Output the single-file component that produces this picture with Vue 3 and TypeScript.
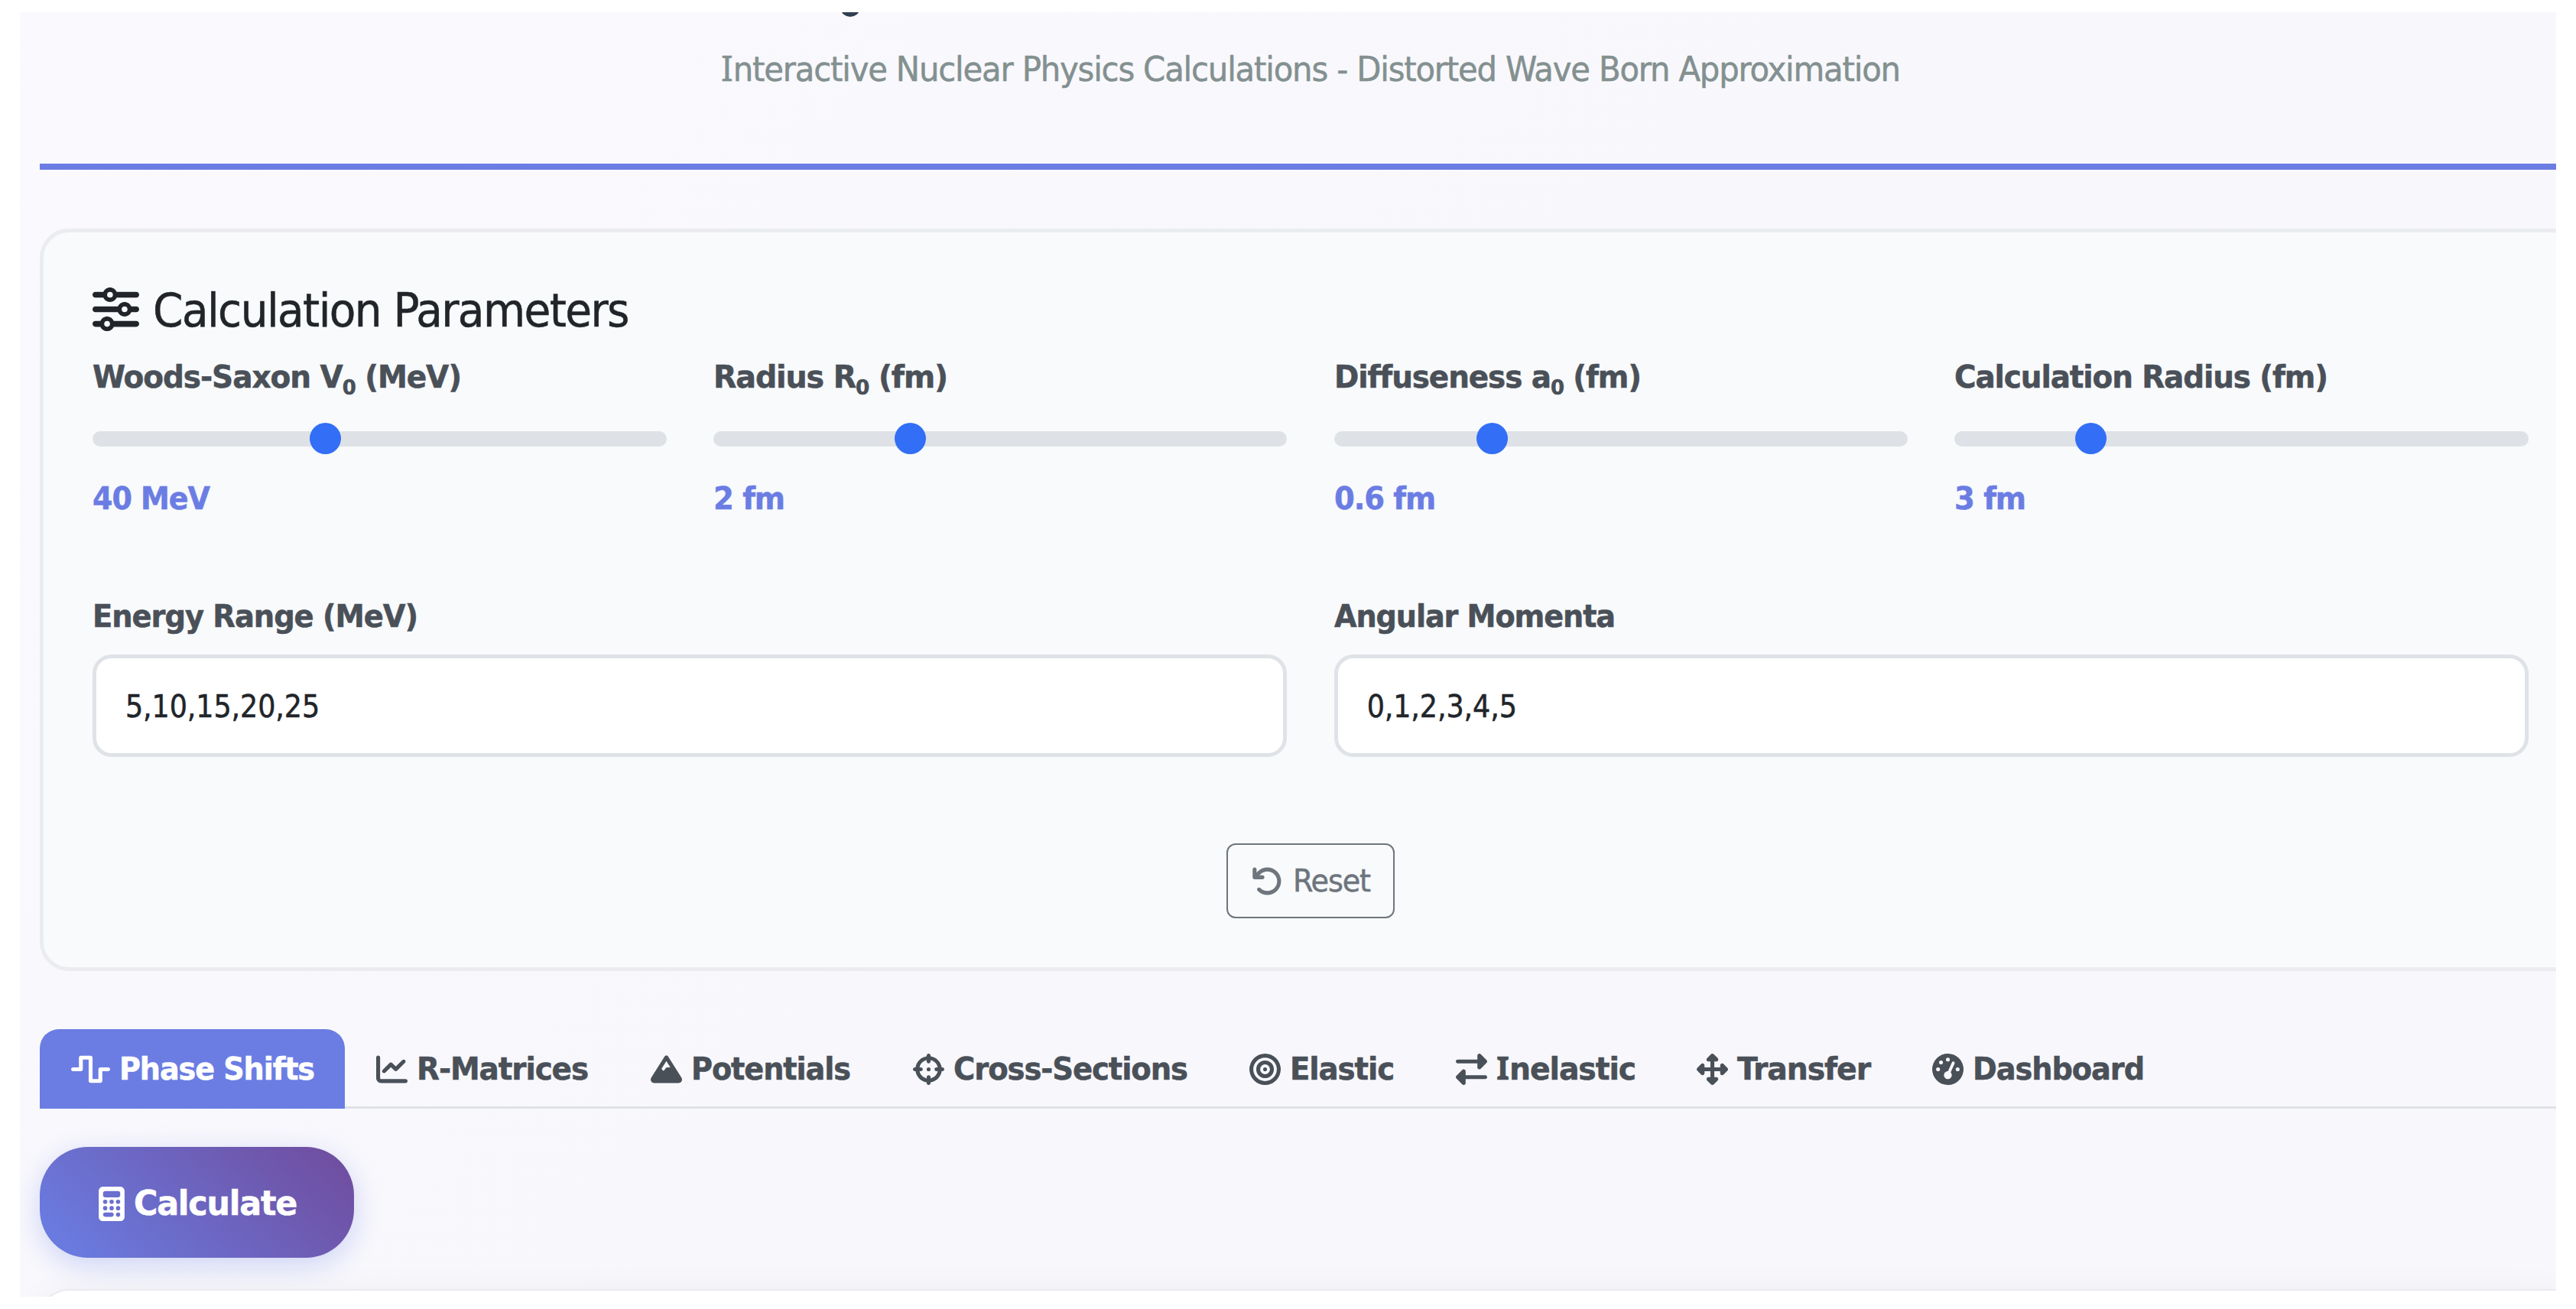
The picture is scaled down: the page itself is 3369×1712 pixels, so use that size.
<script setup lang="ts">
import { ref } from 'vue'

interface Param {
  label: string
  sub?: string
  unit: string
  value: string
  ratio: number
  labelWidth: number
  valueWidth: number
}

interface Tab {
  name: string
  icon: string
  box: string
  iconWidth: number
  width: number
  textWidth: number
}

const params: Param[] = [
  { label: 'Woods-Saxon V', sub: '0', unit: ' (MeV)', value: '40 MeV', ratio: 0.4, labelWidth: 482, valueWidth: 153 },
  { label: 'Radius R', sub: '0', unit: ' (fm)', value: '2 fm', ratio: 0.3343, labelWidth: 306, valueWidth: 93 },
  { label: 'Diffuseness a', sub: '0', unit: ' (fm)', value: '0.6 fm', ratio: 0.2625, labelWidth: 401, valueWidth: 132 },
  { label: 'Calculation Radius', unit: ' (fm)', value: '3 fm', ratio: 0.2222, labelWidth: 488, valueWidth: 93 },
]

const energies = ref('5,10,15,20,25')
const momenta = ref('0,1,2,3,4,5')
const active = ref('Phase Shifts')

const tabs: Tab[] = [
  { name: 'Phase Shifts', box: '0 0 640 512', iconWidth: 51, width: 399, textWidth: 255,
    icon: 'M128 64c0-17.7 14.3-32 32-32H320c17.7 0 32 14.3 32 32V416h96V256c0-17.7 14.3-32 32-32H608c17.7 0 32 14.3 32 32s-14.3 32-32 32H512V448c0 17.7-14.3 32-32 32H320c-17.7 0-32-14.3-32-32V96H192V256c0 17.7-14.3 32-32 32H32c-17.7 0-32-14.3-32-32s14.3-32 32-32h96V64z' },
  { name: 'R-Matrices', box: '0 0 512 512', iconWidth: 41, width: 358.6, textWidth: 224,
    icon: 'M64 64c0-17.7-14.3-32-32-32S0 46.3 0 64V400c0 44.2 35.8 80 80 80H480c17.7 0 32-14.3 32-32s-14.3-32-32-32H80c-8.8 0-16-7.2-16-16V64zm406.6 86.6c12.5-12.5 12.5-32.8 0-45.3s-32.8-12.5-45.3 0L320 210.7l-57.4-57.4c-12.5-12.5-32.8-12.5-45.3 0l-112 112c-12.5 12.5-12.5 32.8 0 45.3s32.8 12.5 45.3 0L240 221.3l57.4 57.4c12.5 12.5 32.8 12.5 45.3 0l128-128z' },
  { name: 'Potentials', box: '0 0 512 512', iconWidth: 41, width: 343, textWidth: 208,
    icon: 'M256 32c12.5 0 24.1 6.4 30.7 17L503.4 394.4c5.6 8.9 8.6 19.2 8.6 29.7c0 30.9-25 55.9-55.9 55.9H55.9C25 480 0 455 0 424.1c0-10.5 3-20.8 8.6-29.7L225.2 49c6.6-10.6 18.3-17 30.8-17zm65 192L256 120.4 176.9 246.5l18.3 24.4c6.4 8.5 19.2 8.5 25.6 0l25.6-34.1c6-8.1 15.5-12.8 25.6-12.8h49z' },
  { name: 'Cross-Sections', box: '0 0 512 512', iconWidth: 41, width: 440.4, textWidth: 306,
    icon: 'M256 0c17.7 0 32 14.3 32 32V42.4c93.7 13.9 167.7 88 181.6 181.6H480c17.7 0 32 14.3 32 32s-14.3 32-32 32H469.6c-13.9 93.7-88 167.7-181.6 181.6V480c0 17.7-14.3 32-32 32s-32-14.3-32-32V469.6C130.3 455.7 56.3 381.7 42.4 288H32c-17.7 0-32-14.3-32-32s14.3-32 32-32H42.4C56.3 130.3 130.3 56.3 224 42.4V32c0-17.7 14.3-32 32-32zM107.4 288c12.5 58.3 58.4 104.1 116.6 116.6V384c0-17.7 14.3-32 32-32s32 14.3 32 32v20.6c58.3-12.5 104.1-58.4 116.6-116.6H384c-17.7 0-32-14.3-32-32s14.3-32 32-32h20.6C392.1 165.7 346.3 119.9 288 107.4V128c0 17.7-14.3 32-32 32s-32-14.3-32-32V107.4C165.7 119.9 119.9 165.7 107.4 224H128c17.7 0 32 14.3 32 32s-14.3 32-32 32H107.4zM256 224a32 32 0 1 1 0 64 32 32 0 1 1 0-64z' },
  { name: 'Elastic', box: '0 0 512 512', iconWidth: 41, width: 269.7, textWidth: 136,
    icon: 'M448 256A192 192 0 1 0 64 256a192 192 0 1 0 384 0zM0 256a256 256 0 1 1 512 0A256 256 0 1 1 0 256zm256 80a80 80 0 1 0 0-160 80 80 0 1 0 0 160zm0-224a144 144 0 1 1 0 288 144 144 0 1 1 0-288zM224 256a32 32 0 1 1 64 0 32 32 0 1 1 -64 0z' },
  { name: 'Inelastic', box: '0 0 512 512', iconWidth: 41, width: 315.6, textWidth: 182,
    icon: 'M32 96l320 0V32c0-12.9 7.8-24.6 19.8-29.6s25.7-2.2 34.9 6.9l96 96c6 6 9.4 14.1 9.4 22.6s-3.4 16.6-9.4 22.6l-96 96c-9.2 9.2-22.9 11.9-34.9 6.9s-19.8-16.6-19.8-29.6V160L32 160c-17.7 0-32-14.3-32-32s14.3-32 32-32zM480 352c17.7 0 32 14.3 32 32s-14.3 32-32 32H160v64c0 12.9-7.8 24.6-19.8 29.6s-25.7 2.2-34.9-6.9l-96-96c-6-6-9.4-14.1-9.4-22.6s3.4-16.6 9.4-22.6l96-96c9.2-9.2 22.9-11.9 34.9-6.9s19.8 16.6 19.8 29.6l0 64H480z' },
  { name: 'Transfer', box: '0 0 512 512', iconWidth: 41, width: 307.6, textWidth: 174,
    icon: 'M278.6 9.4c-12.5-12.5-32.8-12.5-45.3 0l-64 64c-9.2 9.2-11.9 22.9-6.9 34.9s16.6 19.8 29.6 19.8h32v96H128V192c0-12.9-7.8-24.6-19.8-29.6s-25.7-2.2-34.9 6.9l-64 64c-12.5 12.5-12.5 32.8 0 45.3l64 64c9.2 9.2 22.9 11.9 34.9 6.9s19.8-16.6 19.8-29.6V288h96v96H192c-12.9 0-24.6 7.8-29.6 19.8s-2.2 25.7 6.9 34.9l64 64c12.5 12.5 32.8 12.5 45.3 0l64-64c9.2-9.2 11.9-22.9 6.9-34.9s-16.6-19.8-29.6-19.8H288V288h96v32c0 12.9 7.8 24.6 19.8 29.6s25.7 2.2 34.9-6.9l64-64c12.5-12.5 12.5-32.8 0-45.3l-64-64c-9.2-9.2-22.9-11.9-34.9-6.9s-19.8 16.6-19.8 29.6v32H288V128h32c12.9 0 24.6-7.8 29.6-19.8s2.2-25.7-6.9-34.9l-64-64z' },
  { name: 'Dashboard', box: '0 0 512 512', iconWidth: 41, width: 357, textWidth: 224,
    icon: 'M0 256a256 256 0 1 1 512 0A256 256 0 1 1 0 256zM288 96a32 32 0 1 0 -64 0 32 32 0 1 0 64 0zM256 416c35.3 0 64-28.7 64-64c0-17.4-6.9-33.1-18.1-44.6L366 161.7c5.3-12.1-.2-26.3-12.3-31.6s-26.3 .2-31.6 12.3L257.9 288c-.6 0-1.3 0-1.9 0c-35.3 0-64 28.7-64 64s28.7 64 64 64zM176 144a32 32 0 1 0 -64 0 32 32 0 1 0 64 0zM96 288a32 32 0 1 0 0-64 32 32 0 1 0 0 64zm352-32a32 32 0 1 0 -64 0 32 32 0 1 0 64 0z' },
]

// Stretches a label so that it fills exactly the given number of pixels.
const vFit = {
  mounted(el: HTMLElement, binding: { value: number }) {
    const natural = el.getBoundingClientRect().width
    el.style.transform = `scaleX(${binding.value / natural})`
  },
}
</script>

<template>
  <div class="page">
    <main class="frame">
      <div class="content">
        <header class="header">
          <span class="descender"></span>
          <p class="subtitle"><span v-fit="1542" class="fit centered"><span class="slab">I</span>nteractive Nuclear Physics Calculations - Distorted Wave Born Approximation</span></p>
        </header>

        <section class="panel">
          <h4 class="title">
            <svg class="title-icon" viewBox="0 0 512 512"><path d="M0 416c0 17.7 14.3 32 32 32l54.7 0c12.3 28.3 40.5 48 73.3 48s61-19.7 73.3-48L480 448c17.7 0 32-14.3 32-32s-14.3-32-32-32l-246.7 0c-12.3-28.3-40.5-48-73.3-48s-61 19.7-73.3 48L32 384c-17.7 0-32 14.3-32 32zm128 0a32 32 0 1 1 64 0 32 32 0 1 1 -64 0zM320 256a32 32 0 1 1 64 0 32 32 0 1 1 -64 0zm32-80c-32.8 0-61 19.7-73.3 48L32 224c-17.7 0-32 14.3-32 32s14.3 32 32 32l246.7 0c12.3 28.3 40.5 48 73.3 48s61-19.7 73.3-48l54.7 0c17.7 0 32-14.3 32-32s-14.3-32-32-32l-54.7 0c-12.3-28.3-40.5-48-73.3-48zM192 128a32 32 0 1 1 0-64 32 32 0 1 1 0 64zm73.3-64C253 35.7 224.8 16 192 16s-61 19.7-73.3 48L32 64C14.3 64 0 78.3 0 96s14.3 32 32 32l86.7 0c12.3 28.3 40.5 48 73.3 48s61-19.7 73.3-48L480 128c17.7 0 32-14.3 32-32s-14.3-32-32-32L265.3 64z" /></svg>
            <span v-fit="622" class="fit">Calculation Parameters</span>
          </h4>

          <div class="sliders">
            <div v-for="p in params" :key="p.label" class="param">
              <label class="label"><span v-fit="p.labelWidth" class="fit">{{ p.label }}<sub v-if="p.sub">{{ p.sub }}</sub>{{ p.unit }}</span></label>
              <div class="range">
                <div class="track"></div>
                <div class="thumb" :style="{ left: `calc((100% - 41px) * ${p.ratio})` }"></div>
              </div>
              <div class="value"><span v-fit="p.valueWidth" class="fit">{{ p.value }}</span></div>
            </div>
          </div>

          <div class="fields">
            <div class="field">
              <label class="label"><span v-fit="425" class="fit">Energy Range (MeV)</span></label>
              <input v-model="energies" class="input" type="text" />
            </div>
            <div class="field">
              <label class="label"><span v-fit="367" class="fit">Angular Momenta</span></label>
              <input v-model="momenta" class="input" type="text" />
            </div>
          </div>

          <div class="actions">
            <button class="reset">
              <svg viewBox="0 0 512 512"><path d="M125.7 160H176c17.7 0 32 14.3 32 32s-14.3 32-32 32H48c-17.7 0-32-14.3-32-32V64c0-17.7 14.3-32 32-32s32 14.3 32 32v51.2L97.6 97.6c87.5-87.5 229.3-87.5 316.8 0s87.5 229.3 0 316.8s-229.3 87.5-316.8 0c-12.5-12.5-12.5-32.8 0-45.3s32.8-12.5 45.3 0c62.5 62.5 163.8 62.5 226.3 0s62.5-163.8 0-226.3s-163.8-62.5-226.3 0L125.7 160z" /></svg>
              <span v-fit="101" class="fit">Reset</span>
            </button>
          </div>
        </section>

        <nav class="tabs">
          <button
            v-for="t in tabs"
            :key="t.name"
            class="tab"
            :class="{ active: t.name === active }"
            :style="{ width: `${t.width}px` }"
            @click="active = t.name"
          >
            <svg :viewBox="t.box" :style="{ width: `${t.iconWidth}px` }"><path :d="t.icon" /></svg>
            <span v-if="t.name.startsWith('I')" v-fit="t.textWidth" class="fit"><span class="slab">I</span>{{ t.name.slice(1) }}</span>
            <span v-else v-fit="t.textWidth" class="fit">{{ t.name }}</span>
          </button>
        </nav>

        <button class="calculate">
          <svg viewBox="0 0 384 512"><path d="M64 0C28.7 0 0 28.7 0 64V448c0 35.3 28.7 64 64 64H320c35.3 0 64-28.7 64-64V64c0-35.3-28.7-64-64-64H64zM96 64H288c17.7 0 32 14.3 32 32v32c0 17.7-14.3 32-32 32H96c-17.7 0-32-14.3-32-32V96c0-17.7 14.3-32 32-32zm32 160a32 32 0 1 1 -64 0 32 32 0 1 1 64 0zM96 352a32 32 0 1 1 0-64 32 32 0 1 1 0 64zM64 416c0-17.7 14.3-32 32-32h96c17.7 0 32 14.3 32 32s-14.3 32-32 32H96c-17.7 0-32-14.3-32-32zM192 256a32 32 0 1 1 0-64 32 32 0 1 1 0 64zm32 64a32 32 0 1 1 -64 0 32 32 0 1 1 64 0zm64-64a32 32 0 1 1 0-64 32 32 0 1 1 0 64zm32 64a32 32 0 1 1 -64 0 32 32 0 1 1 64 0zM288 448a32 32 0 1 1 0-64 32 32 0 1 1 0 64z" /></svg>
          <span v-fit="213" class="fit">Calculate</span>
        </button>

        <section class="result"></section>
      </div>
    </main>
  </div>
</template>

<style>
body {
  background: #fff;
  overflow: hidden;
}
</style>

<style scoped>
* {
  box-sizing: border-box;
}

.page {
  width: 3369px;
  height: 1712px;
  padding: 16px 26px;
  background: #fff;
  font-family: "DejaVu Sans Condensed", "DejaVu Sans", "Noto Sans", sans-serif;
  font-size: 40.6px;
  color: #212529;
}

.frame {
  width: 3317px;
  height: 1680px;
  overflow: hidden;
  padding-left: 26px;
  background: linear-gradient(135deg, #faf9fe 0%, #f8f8fc 50%, #f8f7fc 100%);
}

.content {
  display: flex;
  flex-direction: column;
  width: 3324px;
}

button,
input {
  font: inherit;
  margin: 0;
}

svg {
  display: block;
  flex: none;
  fill: currentColor;
  fill-rule: evenodd;
}

.fit {
  display: inline-block;
  white-space: nowrap;
  letter-spacing: -0.025em;
  transform-origin: 0 50%;
  -webkit-text-stroke: 0.5px currentColor;
}

.fit.centered {
  transform-origin: 50% 50%;
}

/* capital I with serifs */
.slab {
  font-family: "Noto Sans", sans-serif;
  line-height: 0;
  letter-spacing: 0;
}

.header {
  position: relative;
  height: 206px;
  border-bottom: 8px solid #6b7de3;
  text-align: center;
}

/* tail of the page heading scrolled out of view */
.descender {
  position: absolute;
  top: -14px;
  left: 1048px;
  width: 24px;
  height: 20px;
  border-radius: 50%;
  background: #2f3e4f;
}

.subtitle {
  margin: 0;
  padding-top: 45px;
  line-height: 60px;
  font-size: 44.7px;
  color: #839090;
}

.panel {
  height: 971px;
  margin-top: 77px;
  padding: 66px 64px 0;
  border: 5px solid #eaecf0;
  border-radius: 38px;
  background: #f8fafc;
}

.title {
  display: flex;
  align-items: center;
  gap: 18px;
  margin: 0;
  height: 71px;
  font-size: 61px;
  line-height: 71px;
  font-weight: 400;
}

.title-icon {
  width: 61px;
  height: 61px;
  margin-top: -3px;
}

.sliders {
  display: grid;
  grid-template-columns: repeat(4, 1fr);
  gap: 61.3px;
  margin-top: 22px;
}

.label {
  display: block;
  height: 60px;
  line-height: 60px;
  font-weight: 700;
  color: #4a5058;
}

.label sub {
  font-size: 27px;
  line-height: 0;
  vertical-align: -9px;
}

.range {
  position: relative;
  display: flex;
  align-items: center;
  height: 41px;
  margin-top: 30px;
}

.track {
  width: 100%;
  height: 20px;
  border-radius: 10px;
  background: #dee1e6;
}

.thumb {
  position: absolute;
  top: 0;
  width: 41px;
  height: 41px;
  border-radius: 50%;
  background: #326ef6;
}

.value {
  height: 60px;
  margin-top: 28px;
  line-height: 60px;
  font-weight: 700;
  color: #6b7de3;
}

.fields {
  display: grid;
  grid-template-columns: 1fr 1fr;
  gap: 61.3px;
  margin-top: 94px;
}

.input {
  display: block;
  width: 100%;
  height: 134px;
  margin-top: 20px;
  padding: 2px 38px 0;
  border: 5px solid #dfe3e7;
  border-radius: 25px;
  background: #fff;
  color: #212529;
  letter-spacing: -0.1px;
  -webkit-text-stroke: 0.5px currentColor;
  outline: none;
}

.actions {
  display: flex;
  justify-content: center;
  margin-top: 113px;
}

.reset {
  display: flex;
  align-items: center;
  width: 220px;
  height: 98px;
  padding: 0 0 0 31px;
  border: 2.5px solid #6e757d;
  border-radius: 12px;
  background: transparent;
  color: #6e757d;
}

.reset svg {
  width: 41px;
  height: 41px;
  margin-right: 13px;
}

.tabs {
  display: flex;
  height: 104px;
  margin-top: 76px;
  box-shadow: inset 0 -3px 0 #dfe2e6;
}

.tab {
  display: flex;
  align-items: center;
  flex: none;
  height: 104px;
  padding: 0 0 0 41px;
  border: 0;
  border-radius: 25px 25px 0 0;
  background: transparent;
  font-weight: 700;
  color: #4a5058;
}

.tab svg {
  height: 41px;
  margin-right: 12px;
}

.tab.active {
  background: #6b7de3;
  color: #fff;
}

.calculate {
  display: flex;
  align-items: center;
  width: 411px;
  height: 145px;
  margin-top: 50px;
  padding: 3px 0 0 77px;
  border: 0;
  border-radius: 63px;
  background: linear-gradient(45deg, #697fe5 0%, #704b9c 100%);
  box-shadow: 0 10px 38px rgba(107, 125, 227, 0.3);
  font-size: 44.7px;
  font-weight: 700;
  color: #fff;
}

.calculate svg {
  width: 34px;
  height: 45px;
  margin-right: 12px;
}

.result {
  height: 200px;
  margin-top: 41px;
  border: 2px solid #ebebef;
  border-radius: 38px;
  background: #fff;
  box-shadow: 0 13px 51px rgba(0, 0, 0, 0.07);
}
</style>
